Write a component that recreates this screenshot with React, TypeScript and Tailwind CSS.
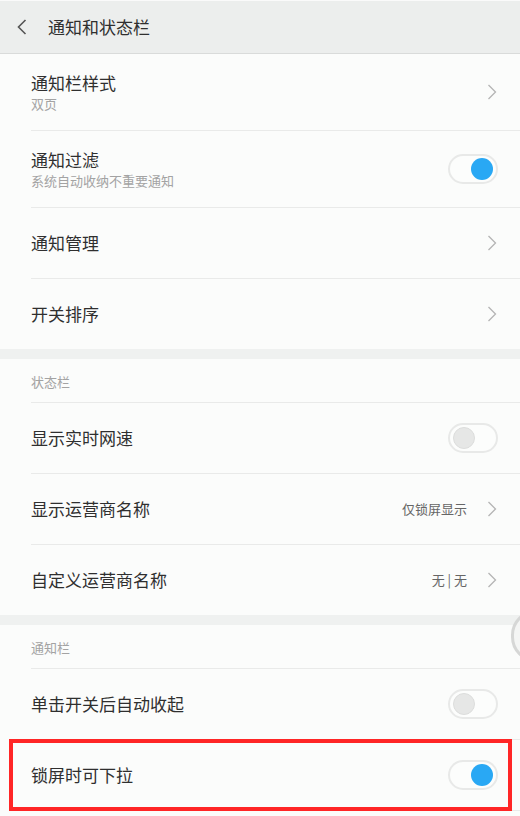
import React from "react";

const font = { fontFamily: '"Noto Sans CJK SC", "Noto Sans", sans-serif' };

function Chevron() {
  return (
    <svg width="10" height="16" viewBox="0 0 10 16" className="shrink-0">
      <path d="M1.5 1 L8.5 8 L1.5 15" fill="none" stroke="#b4b4b4" strokeWidth="1.3" />
    </svg>
  );
}

function Toggle({ on }: { on: boolean }) {
  return (
    <div className="w-[50px] h-[30px] rounded-full border-2 border-[#e8e9e8] bg-[#fcfdfc] flex items-center px-[3px] shrink-0">
      {on ? (
        <div className="ml-auto w-[22px] h-[22px] rounded-full bg-[#29a8f4]" />
      ) : (
        <div className="w-[22px] h-[22px] rounded-full bg-[#e6e7e6] border border-[#dcdddc]" />
      )}
    </div>
  );
}

function Row({
  title,
  sub,
  right,
  h,
  divider = true,
}: {
  title: string;
  sub?: string;
  right: React.ReactNode;
  h: string;
  divider?: boolean;
}) {
  return (
    <div className={`pl-[31px] ${h} flex flex-col`}>
      <div className="flex-1 flex items-center pr-[22px]">
        <div className="flex-1 flex flex-col">
          <div className="text-[17px] leading-[22px] text-[#2f2f2f]">{title}</div>
          {sub && <div className="text-[13px] leading-[17px] text-[#a3a3a3] mt-[1px]">{sub}</div>}
        </div>
        {right}
      </div>
      {divider && <div className="h-px bg-[#e9eae9]" />}
    </div>
  );
}

function ValueChevron({ v }: { v: string }) {
  return (
    <div className="flex items-center">
      <span className="text-[13px] text-[#666666] mr-[20px]">{v}</span>
      <div className="mr-[1px]">
        <Chevron />
      </div>
    </div>
  );
}

function SectionHeader({ t }: { t: string }) {
  return (
    <div className="pl-[31px] h-[44px] flex flex-col">
      <div className="flex-1 flex items-center text-[13px] text-[#a3a3a3] pt-[2px]">{t}</div>
      <div className="h-px bg-[#e9eae9]" />
    </div>
  );
}

function Band() {
  return <div className="h-[10px] bg-[#eff1f0]" />;
}

export default function App() {
  return (
    <div className="relative w-[520px] h-[816px] overflow-hidden bg-[#fbfcfb]" style={font}>
      <div className="h-[54px] bg-[#eceeed] border-b border-[#d9dbda] border-t border-t-[#fafafa] flex items-center">
        <div className="w-[48px] pl-[16px]">
          <svg width="12" height="16" viewBox="0 0 12 16">
            <path d="M9.5 1 L2.5 8 L9.5 15" fill="none" stroke="#555" strokeWidth="1.6" />
          </svg>
        </div>
        <div className="text-[17px] text-[#2f2f2f]">通知和状态栏</div>
      </div>

      <Row title="通知栏样式" sub="双页" h="h-[77px]" right={<div className="mr-[1px]"><Chevron /></div>} />
      <Row title="通知过滤" sub="系统自动收纳不重要通知" h="h-[77px]" right={<Toggle on />} />
      <Row title="通知管理" h="h-[71px]" right={<div className="mr-[1px]"><Chevron /></div>} />
      <Row title="开关排序" h="h-[70px]" divider={false} right={<div className="mr-[1px]"><Chevron /></div>} />
      <Band />
      <SectionHeader t="状态栏" />
      <Row title="显示实时网速" h="h-[71px]" right={<Toggle on={false} />} />
      <Row title="显示运营商名称" h="h-[71px]" right={<ValueChevron v="仅锁屏显示" />} />
      <Row title="自定义运营商名称" h="h-[70px]" divider={false} right={<ValueChevron v="无 | 无" />} />
      <Band />
      <SectionHeader t="通知栏" />
      <Row title="单击开关后自动收起" h="h-[71px]" right={<Toggle on={false} />} />
      <Row title="锁屏时可下拉" h="h-[71px]" right={<Toggle on />} />

      <div className="absolute left-[9px] top-[739px] w-[503px] h-[72px] border-4 border-[#ff2626]" />
      <div className="absolute left-[511px] top-[610px] w-[50px] h-[52px] rounded-full border-[3px] border-[#d6d7d6] bg-[#f4f5f4]" />
    </div>
  );
}
